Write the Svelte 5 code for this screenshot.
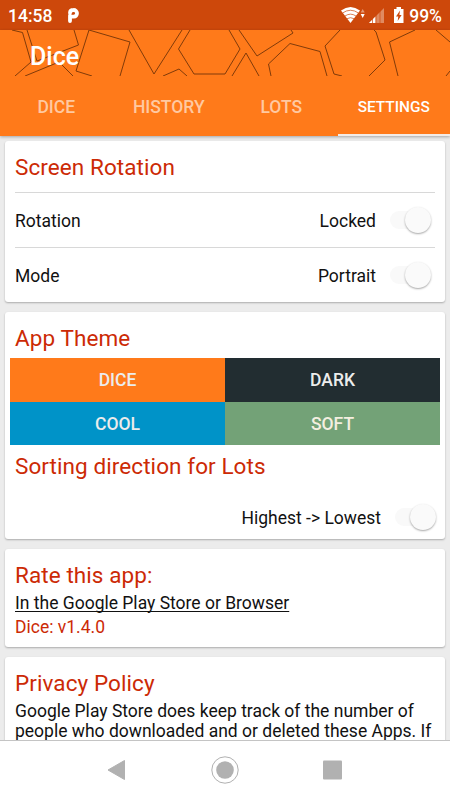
<script lang="ts">
  const tabs = ["Dice", "History", "Lots", "Settings"];
  const themes = ["dice", "dark", "cool", "soft"];
  let activeTab: string = $state("Settings");
  let theme: string = $state("dice");

  const rotationRows = [
    { label: "Rotation", value: "Locked" },
    { label: "Mode", value: "Portrait" },
  ];
</script>

{#snippet toggle(label: string)}
  <button class="toggle" role="switch" aria-checked="true" aria-label={label}>
    <span class="toggle__track"></span>
    <span class="toggle__thumb"></span>
  </button>
{/snippet}

<div class="app">
  <div class="status">
    <span class="status__time">14:58</span>
    <svg class="status__app" width="14" height="18" viewBox="0 0 14 18">
      <path
        d="M3 15V9.500M3 7Q3 4 6.500 4A3.300 3.300 0 0 1 6.800 10.700H5.500"
        fill="none"
        stroke="#fff"
        stroke-width="3.800"
        stroke-linecap="round"
      />
    </svg>
    <svg class="status__icons" width="66" height="18" viewBox="340 6 66 18">
      <path d="M341 10.500Q350.500 3.500 360 10.500L350.500 23Z" fill="#fff" />
      <path
        d="M342.500 13Q350.500 7.500 358.500 13M345 16Q350.500 12.300 356 16M347 18.700Q350.500 16.700 354 18.700"
        fill="none"
        stroke="#cd480b"
        stroke-width="0.7"
      />
      <path d="M360.700 12.600L362.700 9L364.700 12.600Z" fill="#e39b79" />
      <path d="M360.700 14L364.700 14L362.700 18Z" fill="#fff" />
      <path d="M369 23L384 8V23Z" fill="#e08a61" />
      <path d="M369 23L375.500 16.500V23Z" fill="#fff" />
      <path
        d="M372.500 17V23M376 13V23M380 10V23"
        stroke="#cd480b"
        stroke-width="0.7"
      />
      <path d="M396.500 7H401V9H403.500V23H394V9H396.500Z" fill="#fff" />
      <path d="M400 10.500L396 16.500H398.300L397.700 21L401.600 15H399.400Z" fill="#cd480b" />
    </svg>
    <span class="status__battery">99%</span>
  </div>

  <header>
    <div class="banner">
      <svg class="banner__art" width="450" height="46" viewBox="0 30 450 46">
        <path
          d="M12 30L22.500 32.500L31 62L15 76M27 30L37 61L78.500 45L74 30M25 76L59 62L73 76
          M92 76L76 71L89 30L130 42L120 76M129 30L154 74L182 30M190 30L178.500 49L194 74H225L240 49L229 30
          M163 76L179 69L187 76M239 30L257 56L293 33L291 30M232 76L246 53L259 76
          M271 76L268.500 64L290 43.500L320 51.500L327 76M340 30L325 46L334 74L342 76
          M374 30L376 32L385 60L369 76M398 76L389.500 42L415 30M436 30L450 42M450 71L446 76"
        />
      </svg>
      <h1>Dice</h1>
    </div>
    <nav class="tabs">
      {#each tabs as tab}
        <button
          class="tab"
          class:tab--active={tab === activeTab}
          onclick={() => (activeTab = tab)}>{tab}</button
        >
      {/each}
    </nav>
  </header>

  <main>
    <section class="card card--rotation">
      <h2>Screen Rotation</h2>
      {#each rotationRows as row}
        <div class="row">
          <span>{row.label}</span>
          <span class="row__value">{row.value}</span>
          {@render toggle(row.label)}
        </div>
      {/each}
    </section>

    <section class="card card--theme">
      <h2>App Theme</h2>
      <div class="themes">
        {#each themes as name}
          <button class="theme theme--{name}" onclick={() => (theme = name)}>{name}</button>
        {/each}
      </div>
      <h2>Sorting direction for Lots</h2>
      <div class="sorting">
        <span class="row__value">Highest -&gt; Lowest</span>
        {@render toggle("Sorting direction")}
      </div>
    </section>

    <section class="card card--rate">
      <h2>Rate this app:</h2>
      <p class="link">In the Google Play Store or Browser</p>
      <p class="version">Dice: v1.4.0</p>
    </section>

    <section class="card card--privacy">
      <h2>Privacy Policy</h2>
      <p>Google Play Store does keep track of the number of people who downloaded and or deleted these Apps. If</p>
    </section>
  </main>

  <footer>
    <svg width="450" height="59" viewBox="0 741 450 59">
      <path d="M108 770L124.500 760.500V779.500Z" fill="#b1b1b1" stroke="#b1b1b1" stroke-linejoin="round" />
      <circle cx="225" cy="770" r="13.200" fill="none" stroke="#b1b1b1" />
      <circle cx="225" cy="770" r="8.800" fill="#b1b1b1" />
      <rect x="323" y="760.500" width="19" height="19" rx="1" fill="#b1b1b1" />
    </svg>
  </footer>
</div>

<style>
  :global(body) {
    margin: 0;
  }

  .app {
    display: flex;
    flex-direction: column;
    width: 450px;
    height: 800px;
    overflow: hidden;
    background: #ececec;
    color: #111;
    font-family: Roboto, sans-serif;
    font-size: 17.5px;
  }

  button {
    padding: 0;
    border: 0;
    background: none;
    font: inherit;
    letter-spacing: inherit;
  }

  h1,
  h2,
  p {
    margin: 0;
    font-weight: 400;
  }

  .status {
    display: flex;
    align-items: center;
    flex: none;
    box-sizing: border-box;
    height: 30px;
    padding: 0 8px;
    background: #cd480b;
    color: #fff;
    font-weight: 500;
  }
  .status__time,
  .status__battery {
    padding-top: 2px;
  }
  .status__app {
    margin-left: 15px;
  }
  .status__icons {
    margin-left: auto;
    margin-right: 3px;
  }

  header {
    flex: none;
    height: 106px;
    background: #ff7a1a;
    box-shadow: 0 1px 3px rgba(0, 0, 0, 0.3);
    z-index: 1;
  }
  .banner {
    display: grid;
    height: 46px;
  }
  .banner > :global(*) {
    grid-area: 1 / 1;
  }
  .banner__art {
    fill: none;
    stroke: #813b0a;
    stroke-width: 1;
  }
  h1 {
    padding: 12px 0 0 30px;
    color: #fff;
    font-size: 25px;
    font-weight: 500;
    line-height: 30px;
    z-index: 1;
  }
  .tabs {
    display: grid;
    grid-template-columns: repeat(4, 1fr);
    height: 60px;
  }
  .tab {
    box-sizing: border-box;
    padding-top: 4px;
    border-bottom: 2px solid transparent;
    color: #ffc9a1;
    font-weight: 500;
    text-transform: uppercase;
  }
  .tab--active {
    border-color: #f3ece8;
    color: #fff;
    font-size: 15.4px;
  }

  main {
    display: flex;
    flex-direction: column;
    gap: 10px;
    flex: 1;
    min-height: 0;
    overflow: hidden;
    padding: 5px 5px 0;
  }
  .card {
    flex: none;
    box-sizing: border-box;
    padding: 0 10px;
    border-radius: 3px;
    background: #fff;
    box-shadow: 0 1px 2px rgba(0, 0, 0, 0.28);
  }
  .card--rotation {
    height: 161px;
  }
  .card--theme {
    height: 227px;
  }
  .card--rate {
    height: 98px;
  }
  .card--privacy {
    height: 200px;
  }

  h2 {
    padding-top: 13px;
    color: #cc2a05;
    font-size: 22.5px;
    line-height: 26px;
    letter-spacing: 0.08px;
  }
  p {
    line-height: 20px;
  }
  h2 + p {
    margin-top: 5px;
  }
  .card--rotation h2 {
    padding-bottom: 12px;
  }

  .row {
    display: flex;
    align-items: center;
    height: 54px;
    padding-right: 4px;
    border-top: 1px solid #d8d8d8;
  }
  .row span {
    padding-top: 2px;
  }
  .row__value {
    margin-left: auto;
    margin-right: 14px;
  }

  .toggle {
    display: flex;
    align-items: center;
    width: 41px;
    height: 28px;
  }
  .row .toggle span {
    padding-top: 0;
  }
  .toggle__track {
    width: 28px;
    height: 18px;
    border-radius: 9px;
    background: #f9f9f9;
  }
  .toggle__thumb {
    flex: none;
    width: 26px;
    height: 26px;
    margin-left: -13px;
    border-radius: 50%;
    background: #fafafa;
    box-shadow: 0 1px 2px rgba(0, 0, 0, 0.35);
  }

  .themes {
    display: grid;
    grid-template-columns: 1fr 1fr;
    grid-template-rows: 44px 43px;
    margin: 7px -5px 0;
  }
  .theme {
    color: #ececec;
    font-weight: 500;
    text-transform: uppercase;
  }
  .theme--dice {
    background: #ff7a1a;
  }
  .theme--dark {
    background: #222d31;
  }
  .theme--cool {
    background: #0093c8;
  }
  .theme--soft {
    background: #73a277;
    color: #f4efe0;
  }
  .card--theme .themes + h2 {
    padding-top: 8px;
  }
  .sorting {
    display: flex;
    align-items: center;
    height: 44px;
    margin-top: 16px;
  }
  .sorting .row__value {
    padding-top: 2px;
  }
  .sorting .toggle {
    margin-right: -1px;
  }

  .link {
    text-decoration: underline;
    text-underline-offset: 2px;
    text-decoration-skip-ink: none;
  }
  .version {
    margin-top: 4px;
    color: #cc2a05;
  }

  footer {
    flex: none;
    height: 59px;
    border-top: 1px solid #c4c4c4;
    background: #fff;
    z-index: 1;
  }
  footer svg {
    display: block;
  }
</style>
